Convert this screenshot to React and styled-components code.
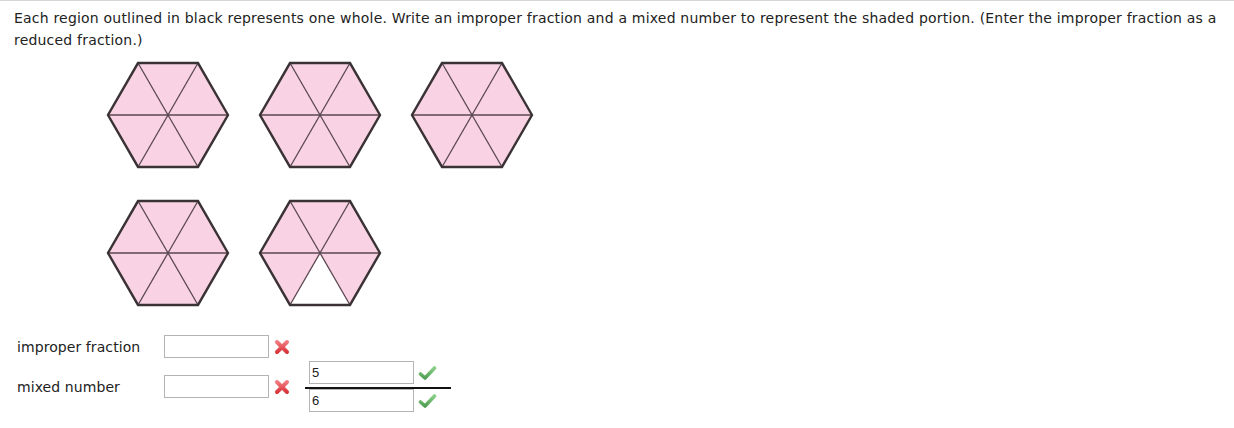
import React from "react";
import styled, { createGlobalStyle } from "styled-components";

const Global = createGlobalStyle`
  html, body { margin: 0; padding: 0; background: #fff; }
  body { font-family: Verdana, "DejaVu Sans", sans-serif; color: #222; }
`;

const Page = styled.div`
  border-top: 1px solid #d6d6d6;
  padding: 6px 6px 0 14px;
  width: 1234px;
  box-sizing: border-box;
`;

const Prompt = styled.p`
  margin: 0;
  font-size: 14px;
  line-height: 22px;
  letter-spacing: 0.2px;
  color: #222;
`;

const Shapes = styled.div`
  display: grid;
  grid-template-columns: repeat(3, 124px);
  column-gap: 28px;
  row-gap: 30px;
  margin: 10px 0 0 92px;
`;

const Form = styled.div`
  display: grid;
  grid-template-columns: 147px auto;
  align-items: center;
  row-gap: 3px;
  margin: 28px 0 0 3px;
`;

const Label = styled.div`
  font-size: 14px;
  letter-spacing: 0.08px;
  color: #222;
`;

const Field = styled.div`
  display: flex;
  align-items: center;
`;

const Box = styled.div`
  width: ${(p) => p.$w || 105}px;
  height: 23px;
  box-sizing: border-box;
  border: 1px solid #b4b4b4;
  background: #fff;
  font-family: "Liberation Sans", Arial, sans-serif;
  font-size: 13px;
  line-height: 21px;
  padding-left: 2px;
  color: #222;
`;

const Mark = styled.svg`
  display: block;
  flex: none;
  margin-left: ${(p) => p.$ml || 0}px;
`;

const Fraction = styled.div`
  display: flex;
  flex-direction: column;
  margin-left: 19px;
`;

const FracRow = styled.div`
  display: flex;
  align-items: center;
`;

const Bar = styled.div`
  width: 146px;
  height: 2px;
  background: #111;
  margin: 3px 0 0 -4px;
`;

const PINK = "#f9d3e4";

function Hexagon({ empty = [] }) {
  const cx = 62, cy = 54, r = 60;
  const pts = [0, 60, 120, 180, 240, 300].map((a) => {
    const rad = (a * Math.PI) / 180;
    return [cx + r * Math.cos(rad), cy - r * Math.sin(rad)];
  });
  const tris = pts.map((p, i) => {
    const q = pts[(i + 1) % 6];
    return `${cx},${cy} ${p[0]},${p[1]} ${q[0]},${q[1]}`;
  });
  return (
    <svg width="124" height="108" viewBox="0 0 124 108">
      {tris.map((t, i) => (
        <polygon key={i} points={t} fill={empty.includes(i) ? "#fff" : PINK} />
      ))}
      {pts.map((p, i) => (
        <line key={i} x1={cx} y1={cy} x2={p[0]} y2={p[1]} stroke="#5a474f" strokeWidth="1.3" />
      ))}
      <polygon
        points={pts.map((p) => p.join(",")).join(" ")}
        fill="none"
        stroke="#3a3235"
        strokeWidth="2.4"
        strokeLinejoin="miter"
      />
    </svg>
  );
}

function Cross({ ml }) {
  return (
    <Mark $ml={ml} width="16" height="16" viewBox="0 0 16 16">
      <defs>
        <linearGradient id="xg" x1="0" y1="0" x2="0" y2="1">
          <stop offset="0" stopColor="#f27a7e" />
          <stop offset="1" stopColor="#d9363c" />
        </linearGradient>
      </defs>
      <path d="M3 3 L13 13 M13 3 L3 13" stroke="url(#xg)" strokeWidth="4" strokeLinecap="round" />
    </Mark>
  );
}

function Check({ ml }) {
  return (
    <Mark $ml={ml} width="19" height="16" viewBox="0 0 19 16">
      <defs>
        <linearGradient id="cg" x1="0" y1="0" x2="0" y2="1">
          <stop offset="0" stopColor="#8ccf8a" />
          <stop offset="1" stopColor="#4f9f52" />
        </linearGradient>
      </defs>
      <path d="M2.5 9 L7 13 L16.5 3" fill="none" stroke="url(#cg)" strokeWidth="3.6" strokeLinecap="round" strokeLinejoin="round" />
    </Mark>
  );
}

export default function App() {
  return (
    <>
      <Global />
      <Page>
        <Prompt>
          Each region outlined in black represents one whole. Write an improper fraction and a mixed number to represent the shaded portion. (Enter the improper fraction as a reduced fraction.)
        </Prompt>
        <Shapes>
          <Hexagon />
          <Hexagon />
          <Hexagon />
          <Hexagon />
          <Hexagon empty={[4]} />
        </Shapes>
        <Form>
          <Label>improper fraction</Label>
          <Field>
            <Box />
            <Cross ml={5} />
          </Field>
          <Label>mixed number</Label>
          <Field>
            <Box />
            <Cross ml={5} />
            <Fraction>
              <FracRow>
                <Box>5</Box>
                <Check ml={4} />
              </FracRow>
              <Bar />
              <FracRow>
                <Box>6</Box>
                <Check ml={4} />
              </FracRow>
            </Fraction>
          </Field>
        </Form>
      </Page>
    </>
  );
}
